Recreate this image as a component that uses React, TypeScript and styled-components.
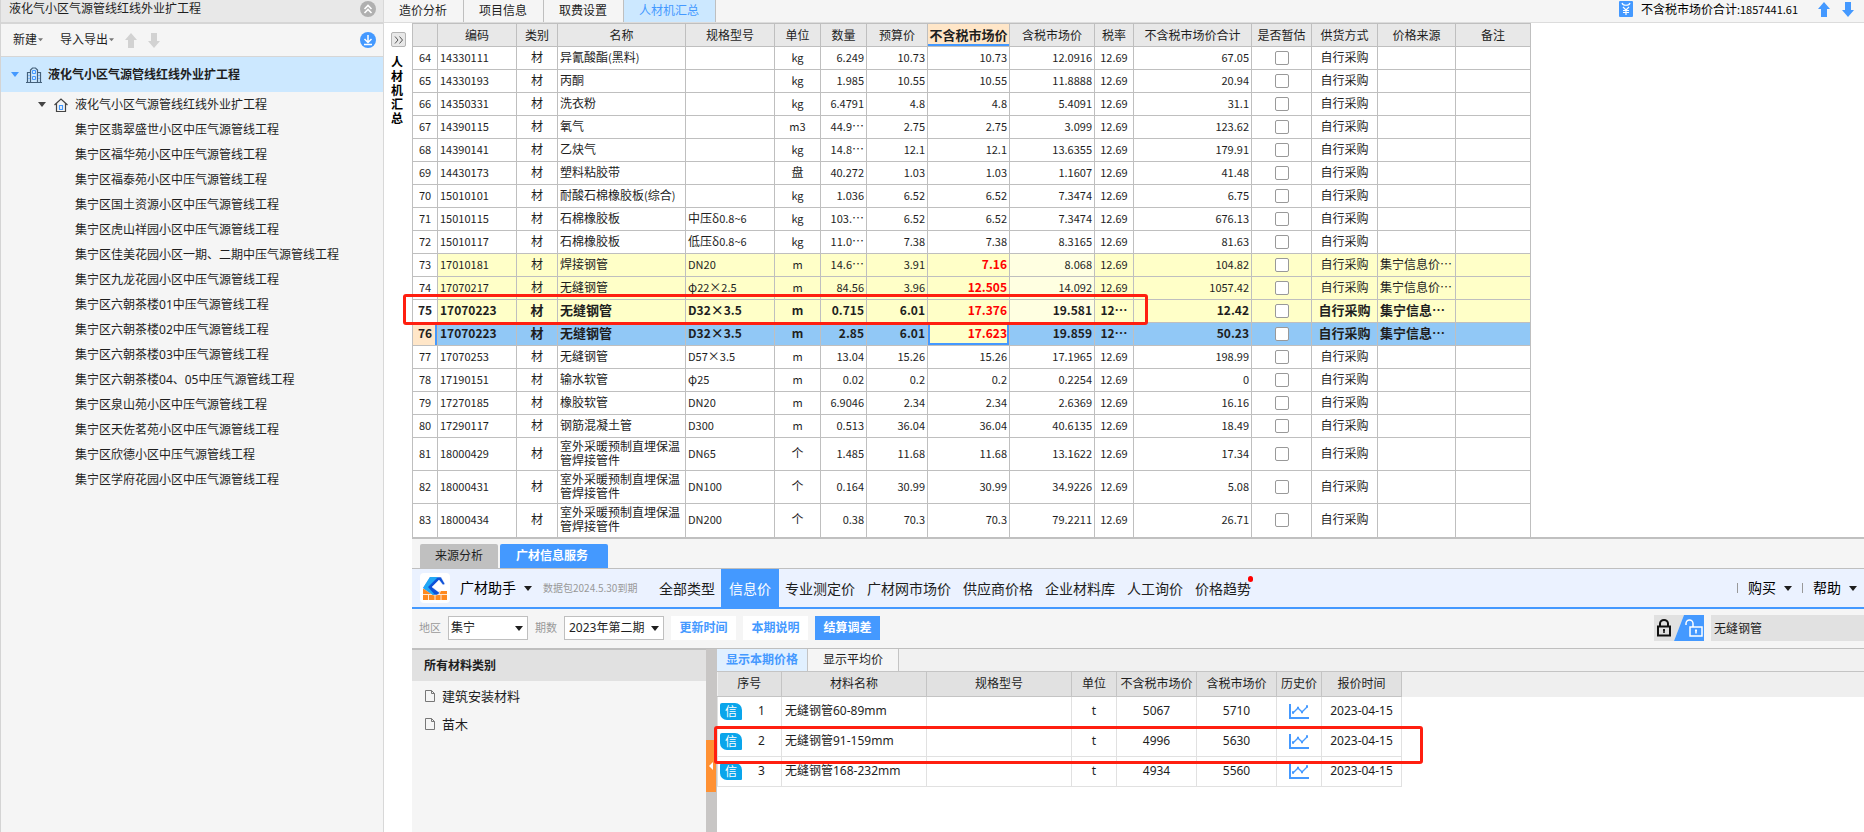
import React from 'react';
import styled, { createGlobalStyle, css } from 'styled-components';

const Global = createGlobalStyle`
  * { box-sizing: border-box; }
  html, body { margin: 0; height: 100%; background: #fff; }
  #root { height: 100%; }
  body, button, input, select, table {
    font-family: 'Noto Sans', 'Noto Sans CJK SC', sans-serif;
    font-size: 12px;
    line-height: 16px;
    color: #1e1e1e;
  }
  button { margin: 0; padding: 0; border: 0; background: none; white-space: nowrap; }
  h2, ul { margin: 0; padding: 0; }
  svg { display: block; flex: none; }
`;

const BLUE = '#4499ff';
const SONG = "'Noto Sans CJK SC', sans-serif";

/* ---------- page ---------- */
const Page = styled.div`
  display: flex;
  min-height: 100%;
  min-width: 1560px;
`;

/* ---------- project sidebar ---------- */
const Sidebar = styled.aside`
  flex: none;
  width: 384px;
  background: #f5f5f5;
  border-left: 1px solid #d4d4d4;
  border-right: 1px solid #d8d8d8;
`;
const SideTitle = styled.header`
  display: flex;
  align-items: center;
  justify-content: space-between;
  height: 24px;
  padding: 0 7px 4px 8px;
  background: #e8e8e8;
  border-bottom: 2px solid #d6d6d6;
`;
const SideTools = styled.div`
  display: flex;
  align-items: center;
  height: 33px;
  padding: 0 7px 0 12px;
  gap: 11px;
  border-bottom: 1px solid #d6d6d6;
  & > :last-child { margin-left: auto; }
`;
const MenuButton = styled.button`
  display: flex;
  align-items: center;
  gap: 1px;
  & + & { margin-left: 6px; }
`;
const Tree = styled.ul`
  list-style: none;
`;
const TreeRoot = styled.li`
  display: flex;
  align-items: center;
  height: 35px;
  padding-left: 10px;
  background: #cce8ff;
  font-weight: 700;
  svg + svg { margin: 0 6px 0 7px; }
`;
const TreeItem = styled.li<{ $branch?: boolean }>`
  display: flex;
  align-items: center;
  height: 25px;
  padding-left: ${(p) => (p.$branch ? 37 : 74)}px;
  svg + svg { margin: 0 7px 0 8px; }
`;

/* ---------- main column ---------- */
const Main = styled.main`
  flex: 1;
  min-width: 0;
  display: flex;
  flex-direction: column;
`;
const TopBar = styled.header`
  display: flex;
  height: 23px;
  background: #f5f5f5;
  border-bottom: 1px solid #dcdcdc;
`;
const TopTab = styled.button<{ $active?: boolean }>`
  padding: 0 16px 0 15px;
  height: 22px;
  border-right: 1px solid #bfbfbf;
  ${(p) => p.$active && css`background: #cce8ff; color: ${BLUE};`}
`;
const Total = styled.div`
  display: flex;
  align-items: center;
  margin-left: auto;
  padding: 0 10px 4px 0;
  font-family: ${SONG};
  color: #000;
  svg + svg { margin-left: 12px; }
`;
const TotalText = styled.span`
  margin: 0 20px 0 8px;
`;
const Body = styled.div`
  flex: 1;
  display: flex;
`;
const Strip = styled.div`
  flex: none;
  width: 28px;
  padding: 9px 0 0 7px;
`;
const ExpandButton = styled.button`
  display: grid;
  place-items: center;
  width: 15px;
  height: 15px;
  border: 1px solid #b4b4b4;
  border-radius: 2px;
  background: #e8e8e8;
`;
const StripLabel = styled.div`
  width: 12px;
  margin-top: 8px;
  font-family: ${SONG};
  font-weight: 700;
  line-height: 14px;
  color: #000;
`;
const Content = styled.div`
  flex: 1;
  min-width: 0;
  display: flex;
  flex-direction: column;
`;

/* ---------- material grid ---------- */
const GridArea = styled.section`
  position: relative;
  flex: none;
  height: 514px;
`;
const Grid = styled.table`
  table-layout: fixed;
  width: 1119px;
  border-collapse: collapse;
  font-family: ${SONG};
  th, td {
    border: 1px solid #bfbfbf;
    padding: 0 2px 2px;
    overflow: hidden;
    font-weight: inherit;
    line-height: 14px;
  }
  thead th { background: #e8e8e8; height: 23px; white-space: nowrap; padding: 0; }
  thead th.current {
    background: #ffe6c8;
    font-weight: 700;
    font-size: 13px;
    box-shadow: inset 0 -2px ${BLUE};
  }
  tbody tr:last-child > * { border-bottom: 0; }
`;
const Small = styled.span`
  font-size: 11px;
`;
const Row = styled.tr<{ $tone?: Tone; $bold?: boolean; $tall?: boolean }>`
  height: ${(p) => (p.$tall ? 33 : 23)}px;
  td { background: ${(p) => (p.$tone === 'selected' ? '#91c8f6' : p.$tone === 'changed' ? '#ffffc8' : '#fff')}; }
  ${(p) => p.$bold && css`
    font-weight: 700;
    font-size: 13px;
    ${Small} { font-size: 12px; }
  `}
`;
const RowNo = styled.th<{ $selected?: boolean }>`
  ${(p) => p.$selected && css`background: #ffe6c8; box-shadow: inset -2px 0 ${BLUE};`}
`;
const Cell = styled.td<{ $align?: 'left' | 'center' | 'right'; $wrap?: boolean }>`
  text-align: ${(p) => p.$align ?? 'left'};
  white-space: ${(p) => (p.$wrap ? 'normal' : 'nowrap')};
`;
const PriceCell = styled(Cell)<{ $changed?: boolean; $selected?: boolean }>`
  ${(p) => p.$changed && css`
    &&& { color: #f00; font-weight: 700; }
    ${Small} { font-size: 12px; }
  `}
  ${(p) => p.$selected && css`
    &&& {
      background: #ffffc8;
      box-shadow: inset 2px 0 ${BLUE}, inset -2px 0 ${BLUE}, inset 0 -2px ${BLUE};
    }
  `}
`;
const TaxedCell = styled(Cell)<{ $light?: boolean }>`
  ${(p) => p.$light && css`&&& { background: #ffffe1; }`}
`;
const Tick = styled.input`
  display: block;
  appearance: none;
  width: 14px;
  height: 14px;
  margin: 1px auto 0;
  border: 1px solid #999;
  border-radius: 2px;
  background: #fff;
`;
const Mark = styled.div`
  position: absolute;
  border: 3px solid #ff1f10;
  border-radius: 3px;
  pointer-events: none;
`;
const GridMark = styled(Mark)`
  left: -9px;
  top: 271px;
  width: 745px;
  height: 31px;
`;

/* ---------- price service panel ---------- */
const Panel = styled.section`
  flex: 1;
  display: flex;
  flex-direction: column;
  border-top: 2px solid #c0c0c0;
  background: #f5f5f5;
`;
const PanelTabs = styled.div`
  display: flex;
  align-items: flex-end;
  gap: 2px;
  height: 30px;
  padding-left: 8px;
  border-bottom: 1px solid #bfbfbf;
`;
const PanelTab = styled.button<{ $active?: boolean }>`
  height: 24px;
  padding: 0 15px;
  border-radius: 2px 2px 0 0;
  background: #c0c0c0;
  ${(p) => p.$active && css`padding: 0 20px 0 16px; background: ${BLUE}; color: #fff; font-weight: 700;`}
`;
const ServiceBar = styled.div`
  display: flex;
  align-items: center;
  height: 40px;
  padding: 0 7px 0 8px;
  background: #ebf2ff;
  border-bottom: 2px solid ${BLUE};
`;
const Logo = styled.span`
  display: grid;
  place-items: center;
  width: 30px;
  height: 30px;
  margin-right: 10px;
  border-radius: 4px;
  background: #fff;
`;
const DropButton = styled.button`
  display: flex;
  align-items: center;
  gap: 8px;
  font-size: 14px;
  color: #000;
`;
const Expiry = styled.span`
  margin: 0 8px 0 11px;
  width: 102px;
  font-family: ${SONG};
  font-size: 10px;
  color: #999;
  white-space: nowrap;
`;
const Nav = styled.nav`
  display: flex;
  height: 38px;
`;
const NavLink = styled.a<{ $active?: boolean }>`
  position: relative;
  padding: 2px ${(p) => (p.$active ? 8 : 6)}px 0;
  font-size: 14px;
  line-height: 36px;
  color: #1e1e1e;
  text-decoration: none;
  white-space: nowrap;
  ${(p) => p.$active && css`background: ${BLUE}; color: #fff;`}
`;
const Dot = styled.i`
  position: absolute;
  top: 7px;
  right: 4px;
  width: 5px;
  height: 6px;
  border-radius: 3px;
  background: #f00;
`;
const BarEnd = styled.div`
  display: flex;
  align-items: center;
  gap: 10px;
  margin-left: auto;
`;
const Divider = styled.i`
  width: 1px;
  height: 10px;
  background: #999;
`;
const FilterBar = styled.form`
  display: flex;
  align-items: center;
  height: 40px;
  padding: 0 0 1px 7px;
  gap: 7px;
  border-bottom: 1px solid #bfbfbf;
`;
const FilterLabel = styled.label`
  display: flex;
  align-items: center;
  gap: 7px;
  font-size: 11px;
  color: #999;
`;
const SelectBox = styled.span`
  position: relative;
  display: flex;
  align-items: center;
  svg { position: absolute; right: 5px; pointer-events: none; }
`;
const Select = styled.select<{ $wide?: boolean }>`
  appearance: none;
  width: ${(p) => (p.$wide ? 100 : 80)}px;
  height: 24px;
  padding: 0 ${(p) => (p.$wide ? 4 : 2)}px;
  border: 1px solid #bfbfbf;
  border-radius: 0;
  background: #fff;
`;
const FilterButton = styled.button<{ $primary?: boolean }>`
  width: 65px;
  height: 24px;
  font-weight: 700;
  color: ${(p) => (p.$primary ? '#fff' : BLUE)};
  background: ${(p) => (p.$primary ? BLUE : '#fff')};
`;
const SearchGroup = styled.div`
  display: flex;
  gap: 7px;
  margin-left: auto;
`;
const Search = styled.input`
  width: 153px;
  height: 26px;
  padding: 0 3px;
  border: 0;
  background: #e1e1e1;
`;
const Split = styled.div`
  flex: 1;
  display: flex;
`;
const Categories = styled.aside`
  flex: none;
  width: 294px;
  h2 {
    height: 32px;
    padding-left: 12px;
    background: #e1e1e1;
    border-top: 1px solid #bfbfbf;
    font-size: 12px;
    line-height: 32px;
  }
  ul { list-style: none; padding-top: 1px; }
`;
const Category = styled.li`
  display: flex;
  align-items: center;
  gap: 7px;
  height: 28px;
  padding-left: 13px;
  font-size: 13px;
`;
const Splitter = styled.div`
  flex: none;
  width: 11px;
  padding-top: 91px;
  background: #c8c6c5;
`;
const SplitHandle = styled.button`
  display: flex;
  align-items: center;
  justify-content: flex-end;
  width: 10px;
  height: 52px;
  padding-right: 3px;
  background: #ff9133;
`;
const Results = styled.div`
  position: relative;
  flex: 1;
  background: #fff;
`;
const ResultTabs = styled.div`
  display: flex;
  height: 23px;
  background: #f1f1f1;
  border-bottom: 1px solid #c4c4c4;
`;
const ResultTab = styled.button<{ $active?: boolean }>`
  padding: 0 ${(p) => (p.$active ? 9 : 15)}px;
  border-right: 1px solid #c4c4c4;
  background: #f5f5f5;
  ${(p) => p.$active && css`background: #e1f0ff; color: ${BLUE}; font-weight: 700;`}
`;
const ResultHead = styled.div`
  background: linear-gradient(#efefef 25px, #fff 25px);
`;
const PriceTable = styled.table`
  table-layout: fixed;
  width: 685px;
  border-collapse: collapse;
  text-align: center;
  th {
    height: 24px;
    padding: 0;
    background: #e1e1e1;
    border-right: 1px solid #c4c4c4;
    border-bottom: 1px solid #c4c4c4;
    font-weight: 400;
    white-space: nowrap;
  }
  td { height: 30px; padding: 0; border: 1px solid #e1e1e1; }
  td svg { margin: 0 auto; }
`;
const NameCell = styled.td`
  && { padding-left: 3px; }
  text-align: left;
  white-space: nowrap;
`;
const Index = styled.div`
  display: flex;
  align-items: center;
  gap: 16px;
  padding-left: 2px;
`;
const Badge = styled.span`
  width: 22px;
  height: 17px;
  border-radius: 2px 7px 1px 7px;
  background: #0aa5eb;
  color: #fff;
  line-height: 17px;
`;
const ResultMark = styled(Mark)`
  left: -3px;
  top: 77px;
  width: 709px;
  height: 38px;
`;

/* ---------- icons ---------- */
const Caret = ({ w = 8, color = '#1e1e1e' }: { w?: number; color?: string }) => (
  <svg width={w} height={w / 2 + 1} viewBox="0 0 8 5"><path d="M0 0h8L4 5z" fill={color} /></svg>
);
const Arrow = ({ down, w = 12, color = BLUE }: { down?: boolean; w?: number; color?: string }) => (
  <svg width={w} height="15" viewBox="0 0 12 15">
    <path d={down ? 'M3 0h6v8h3L6 15 0 8h3z' : 'M3 15h6V7h3L6 0 0 7h3z'} fill={color} />
  </svg>
);
const CollapseIcon = () => (
  <svg width="16" height="16" viewBox="0 0 16 16">
    <circle cx="8" cy="8" r="8" fill="#b0b0b0" />
    <path d="M4.500 8L8 4.500 11.500 8M4.500 12L8 8.500 11.500 12" fill="none" stroke="#fff" strokeWidth="1.600" />
  </svg>
);
const DownloadIcon = () => (
  <svg width="16" height="16" viewBox="0 0 16 16">
    <circle cx="8" cy="8" r="8" fill={BLUE} />
    <path d="M8 3v7M4.500 7L8 10.500 11.500 7M4 12.500h8" fill="none" stroke="#fff" strokeWidth="1.500" />
  </svg>
);
const BuildingIcon = () => (
  <svg width="16" height="16" viewBox="0 0 16 16" fill="none">
    <path d="M0 15.500h16M4.500 15V3l2-2h3l2 2v12M4.500 5.500h-3V15M11.500 5.500h3V15" stroke="#44607a" strokeWidth="1.200" />
    <path d="M6.500 3.500h3v3h-3zM6.500 9.500h3v3h-3zM2.500 8.500h1M2.500 11.500h1M12.500 8.500h1M12.500 11.500h1" stroke={BLUE} />
  </svg>
);
const HouseIcon = () => (
  <svg width="14" height="14" viewBox="0 0 14 14" fill="none">
    <path d="M.5 7L7 1l6.500 6M2.500 5.500v8h9v-8" stroke="#444" strokeWidth="1.200" />
    <path d="M5.500 7.500h3v4h-3z" stroke={BLUE} strokeWidth="1.200" />
  </svg>
);
const YuanIcon = () => (
  <svg width="14" height="16" viewBox="0 0 14 16" fill="none">
    <rect width="14" height="16" rx="1" fill={BLUE} />
    <path d="M3 2c1 3 7 3 8 0M4 6l3 3 3-3M4 9.500h6M4 11.500h6M7 9v5" stroke="#fff" strokeWidth="1.200" />
  </svg>
);
const LogoIcon = () => (
  <svg width="24" height="23" viewBox="0 0 24 23">
    <path d="M0 12h8l5 4 5-2h6v9H0z" fill="#ff8a1e" />
    <path d="M0 17.500h24M5.500 18v5M12 17.500V23M18 18v5M18 12.500l-2 5" stroke="#fff" strokeWidth=".8" />
    <path d="M7 0h11l4 7-2 1-4-5-7 7 8 6-3 2h-4L0 11z" fill="#0f52d8" stroke="#fff" strokeWidth=".5" />
    <path d="M7 0h8L5 10l7 8h-2L0 11z" fill="#22a8f5" />
  </svg>
);
const FileIcon = () => (
  <svg width="10" height="12" viewBox="0 0 10 12" fill="none">
    <path d="M.5.5h6l3 3v8h-9zM6.500.5v3h3" stroke="#777" />
  </svg>
);
const ChevronsIcon = () => (
  <svg width="10" height="8" viewBox="0 0 10 8" fill="none">
    <path d="M1 .5L4 4 1 7.500M5.500.5l3 3.500-3 3.500" stroke="#555" />
  </svg>
);
const ChartIcon = () => (
  <svg width="20" height="15" viewBox="0 0 20 15" fill="none" stroke={BLUE}>
    <path d="M1 0v14h19" strokeWidth="2" />
    <path d="M4 9l5-5 4 4 5-5" strokeWidth="1.300" />
    <path d="M3 8.500h2M8 4h2M12 8h2M17 2.500h2" strokeWidth="2.500" />
  </svg>
);
const LockToggle = () => (
  <svg width="50" height="26" viewBox="0 0 50 26" fill="none">
    <path d="M0 0h30L20 26H0z" fill="#e1e1e1" />
    <path d="M30 0h20v26H20z" fill={BLUE} />
    <path d="M4 11.500h12v9H4zM6 11V8.500a4 3.500 0 0 1 8 0V11" stroke="#111" strokeWidth="2" />
    <path d="M10 14v4M9 15h2" stroke="#111" strokeWidth="1.500" />
    <path d="M36 12h12v9H36zM39 12V8.500a3.500 3.500 0 0 0-7 0V10" stroke="#fff" strokeWidth="1.500" />
    <path d="M42 14.500v4M41 15.500h2" stroke="#fff" strokeWidth="1.500" />
  </svg>
);

/* ---------- data ---------- */
type Tone = 'changed' | 'selected';
type Material = {
  no: number; code: string; name: string; spec?: string; unit: string; qty: string; budget: string;
  price: string; taxed: string; rate?: string; sum: string; source?: string;
  tone?: Tone; bold?: boolean;
};
const PIPE = '室外采暖预制直埋保温管焊接管件';
const materials: Material[] = [
  { no: 64, code: '14330111', name: '异氰酸酯(黑料)', unit: 'kg', qty: '6.249', budget: '10.73', price: '10.73', taxed: '12.0916', sum: '67.05' },
  { no: 65, code: '14330193', name: '丙酮', unit: 'kg', qty: '1.985', budget: '10.55', price: '10.55', taxed: '11.8888', sum: '20.94' },
  { no: 66, code: '14350331', name: '洗衣粉', unit: 'kg', qty: '6.4791', budget: '4.8', price: '4.8', taxed: '5.4091', sum: '31.1' },
  { no: 67, code: '14390115', name: '氧气', unit: 'm3', qty: '44.9…', budget: '2.75', price: '2.75', taxed: '3.099', sum: '123.62' },
  { no: 68, code: '14390141', name: '乙炔气', unit: 'kg', qty: '14.8…', budget: '12.1', price: '12.1', taxed: '13.6355', sum: '179.91' },
  { no: 69, code: '14430173', name: '塑料粘胶带', unit: '盘', qty: '40.272', budget: '1.03', price: '1.03', taxed: '1.1607', sum: '41.48' },
  { no: 70, code: '15010101', name: '耐酸石棉橡胶板(综合)', unit: 'kg', qty: '1.036', budget: '6.52', price: '6.52', taxed: '7.3474', sum: '6.75' },
  { no: 71, code: '15010115', name: '石棉橡胶板', spec: '中压δ0.8~6', unit: 'kg', qty: '103.…', budget: '6.52', price: '6.52', taxed: '7.3474', sum: '676.13' },
  { no: 72, code: '15010117', name: '石棉橡胶板', spec: '低压δ0.8~6', unit: 'kg', qty: '11.0…', budget: '7.38', price: '7.38', taxed: '8.3165', sum: '81.63' },
  { no: 73, code: '17010181', name: '焊接钢管', spec: 'DN20', unit: 'm', qty: '14.6…', budget: '3.91', price: '7.16', taxed: '8.068', sum: '104.82', source: '集宁信息价…', tone: 'changed' },
  { no: 74, code: '17070217', name: '无缝钢管', spec: 'φ22×2.5', unit: 'm', qty: '84.56', budget: '3.96', price: '12.505', taxed: '14.092', sum: '1057.42', source: '集宁信息价…', tone: 'changed' },
  { no: 75, code: '17070223', name: '无缝钢管', spec: 'D32×3.5', unit: 'm', qty: '0.715', budget: '6.01', price: '17.376', taxed: '19.581', rate: '12…', sum: '12.42', source: '集宁信息…', tone: 'changed', bold: true },
  { no: 76, code: '17070223', name: '无缝钢管', spec: 'D32×3.5', unit: 'm', qty: '2.85', budget: '6.01', price: '17.623', taxed: '19.859', rate: '12…', sum: '50.23', source: '集宁信息…', tone: 'selected', bold: true },
  { no: 77, code: '17070253', name: '无缝钢管', spec: 'D57×3.5', unit: 'm', qty: '13.04', budget: '15.26', price: '15.26', taxed: '17.1965', sum: '198.99' },
  { no: 78, code: '17190151', name: '输水软管', spec: 'φ25', unit: 'm', qty: '0.02', budget: '0.2', price: '0.2', taxed: '0.2254', sum: '0' },
  { no: 79, code: '17270185', name: '橡胶软管', spec: 'DN20', unit: 'm', qty: '6.9046', budget: '2.34', price: '2.34', taxed: '2.6369', sum: '16.16' },
  { no: 80, code: '17290117', name: '钢筋混凝土管', spec: 'D300', unit: 'm', qty: '0.513', budget: '36.04', price: '36.04', taxed: '40.6135', sum: '18.49' },
  { no: 81, code: '18000429', name: PIPE, spec: 'DN65', unit: '个', qty: '1.485', budget: '11.68', price: '11.68', taxed: '13.1622', sum: '17.34' },
  { no: 82, code: '18000431', name: PIPE, spec: 'DN100', unit: '个', qty: '0.164', budget: '30.99', price: '30.99', taxed: '34.9226', sum: '5.08' },
  { no: 83, code: '18000434', name: PIPE, spec: 'DN200', unit: '个', qty: '0.38', budget: '70.3', price: '70.3', taxed: '79.2211', sum: '26.71' },
];
const columns: [string, number][] = [
  ['', 25], ['编码', 79], ['类别', 41], ['名称', 128], ['规格型号', 89], ['单位', 46], ['数量', 46], ['预算价', 61],
  ['不含税市场价', 82], ['含税市场价', 85], ['税率', 39], ['不含税市场价合计', 118], ['是否暂估', 60], ['供货方式', 66],
  ['价格来源', 78], ['备注', 75],
];
const projects = ['翡翠盛世小区', '福华苑小区', '福泰苑小区', '国土资源小区', '虎山祥园小区', '佳美花园小区一期、二期', '九龙花园小区',
  '六朝茶楼01', '六朝茶楼02', '六朝茶楼03', '六朝茶楼04、05', '泉山苑小区', '天佐茗苑小区', '欣德小区', '学府花园小区'];
const navItems = ['全部类型', '信息价', '专业测定价', '广材网市场价', '供应商价格', '企业材料库', '人工询价', '价格趋势'];
const priceColumns: [string, number][] = [['序号', 64], ['材料名称', 145], ['规格型号', 145], ['单位', 45], ['不含税市场价', 80],
  ['含税市场价', 80], ['历史价', 45], ['报价时间', 80]];
const prices = [
  ['无缝钢管60-89mm', '5067', '5710'],
  ['无缝钢管91-159mm', '4996', '5630'],
  ['无缝钢管168-232mm', '4934', '5560'],
];

/** Sets the half-width runs of a string one step smaller than its Chinese text. */
const mixed = (text = '') =>
  text.split(/([\x20-\x7e]+)/).filter(Boolean).map((run, i) =>
    /^[\x20-\x7e]/.test(run) ? <Small key={i}>{run}</Small> : <React.Fragment key={i}>{run}</React.Fragment>);

const MaterialRow = ({ m }: { m: Material }) => {
  const selected = m.tone === 'selected';
  return (
    <Row $tone={m.tone} $bold={m.bold} $tall={m.name === PIPE}>
      <RowNo scope="row" $selected={selected}>{mixed(String(m.no))}</RowNo>
      <Cell>{mixed(m.code)}</Cell>
      <Cell $align="center">材</Cell>
      <Cell $wrap>{mixed(m.name)}</Cell>
      <Cell>{mixed(m.spec)}</Cell>
      <Cell $align="center">{mixed(m.unit)}</Cell>
      <Cell $align="right">{mixed(m.qty)}</Cell>
      <Cell $align="right">{mixed(m.budget)}</Cell>
      <PriceCell $align="right" $changed={!!m.tone} $selected={selected}>{mixed(m.price)}</PriceCell>
      <TaxedCell $align="right" $light={m.tone === 'changed'}>{mixed(m.taxed)}</TaxedCell>
      <Cell $align="center">{mixed(m.rate ?? '12.69')}</Cell>
      <Cell $align="right">{mixed(m.sum)}</Cell>
      <Cell><Tick type="checkbox" aria-label={`${m.no} 是否暂估`} /></Cell>
      <Cell $align="center">自行采购</Cell>
      <Cell>{m.source}</Cell>
      <Cell />
    </Row>
  );
};

export default function App() {
  return (
    <Page>
      <Global />
      <Sidebar>
        <SideTitle>液化气小区气源管线红线外业扩工程<button aria-label="收起"><CollapseIcon /></button></SideTitle>
        <SideTools>
          <MenuButton>新建<Caret w={5} color="#777" /></MenuButton>
          <MenuButton>导入导出<Caret w={5} color="#777" /></MenuButton>
          <button aria-label="上移"><Arrow color="#d2d2d2" /></button>
          <button aria-label="下移"><Arrow down color="#d2d2d2" /></button>
          <button aria-label="下载"><DownloadIcon /></button>
        </SideTools>
        <Tree>
          <TreeRoot><Caret color={BLUE} /><BuildingIcon />液化气小区气源管线红线外业扩工程</TreeRoot>
          <TreeItem $branch><Caret color="#444" /><HouseIcon />液化气小区气源管线红线外业扩工程</TreeItem>
          {projects.map((p) => <TreeItem key={p}>集宁区{p}中压气源管线工程</TreeItem>)}
        </Tree>
      </Sidebar>
      <Main>
        <TopBar>
          <TopTab>造价分析</TopTab>
          <TopTab>项目信息</TopTab>
          <TopTab>取费设置</TopTab>
          <TopTab $active>人材机汇总</TopTab>
          <Total>
            <YuanIcon />
            <TotalText>{mixed('不含税市场价合计:1857441.61')}</TotalText>
            <Arrow /><Arrow down />
          </Total>
        </TopBar>
        <Body>
          <Strip>
            <ExpandButton aria-label="展开"><ChevronsIcon /></ExpandButton>
            <StripLabel>人材机汇总</StripLabel>
          </Strip>
          <Content>
            <GridArea>
              <Grid>
                <colgroup>{columns.map(([t, w]) => <col key={t} width={w} />)}</colgroup>
                <thead>
                  <tr>{columns.map(([t]) => <th key={t} scope="col" className={t === '不含税市场价' ? 'current' : undefined}>{t}</th>)}</tr>
                </thead>
                <tbody>{materials.map((m) => <MaterialRow key={m.no} m={m} />)}</tbody>
              </Grid>
              <GridMark />
            </GridArea>
            <Panel>
              <PanelTabs>
                <PanelTab>来源分析</PanelTab>
                <PanelTab $active>广材信息服务</PanelTab>
              </PanelTabs>
              <ServiceBar>
                <Logo><LogoIcon /></Logo>
                <DropButton>广材助手<Caret /></DropButton>
                <Expiry>数据包2024.5.30到期</Expiry>
                <Nav>
                  {navItems.map((t) => (
                    <NavLink key={t} href="#" $active={t === '信息价'}>{t}{t === '价格趋势' && <Dot />}</NavLink>
                  ))}
                </Nav>
                <BarEnd>
                  <Divider /><DropButton>购买<Caret /></DropButton>
                  <Divider /><DropButton>帮助<Caret /></DropButton>
                </BarEnd>
              </ServiceBar>
              <FilterBar>
                <FilterLabel>地区
                  <SelectBox><Select defaultValue="集宁"><option>集宁</option></Select><Caret /></SelectBox>
                </FilterLabel>
                <FilterLabel>期数
                  <SelectBox><Select $wide defaultValue="2023年第二期"><option>2023年第二期</option></Select><Caret /></SelectBox>
                </FilterLabel>
                <FilterButton type="button">更新时间</FilterButton>
                <FilterButton type="button">本期说明</FilterButton>
                <FilterButton type="button" $primary>结算调差</FilterButton>
                <SearchGroup>
                  <button type="button" aria-label="锁定"><LockToggle /></button>
                  <Search aria-label="搜索材料" defaultValue="无缝钢管" />
                </SearchGroup>
              </FilterBar>
              <Split>
                <Categories>
                  <h2>所有材料类别</h2>
                  <ul>
                    <Category><FileIcon />建筑安装材料</Category>
                    <Category><FileIcon />苗木</Category>
                  </ul>
                </Categories>
                <Splitter>
                  <SplitHandle aria-label="收起分类">
                    <svg width="4" height="8" viewBox="0 0 4 8"><path d="M4 0v8L0 4z" fill="#fff" /></svg>
                  </SplitHandle>
                </Splitter>
                <Results>
                  <ResultTabs>
                    <ResultTab $active>显示本期价格</ResultTab>
                    <ResultTab>显示平均价</ResultTab>
                  </ResultTabs>
                  <ResultHead>
                    <PriceTable>
                      <colgroup>{priceColumns.map(([t, w]) => <col key={t} width={w} />)}</colgroup>
                      <thead><tr>{priceColumns.map(([t]) => <th key={t} scope="col">{t}</th>)}</tr></thead>
                      <tbody>
                        {prices.map(([name, net, gross], i) => (
                          <tr key={name}>
                            <td><Index><Badge>信</Badge>{i + 1}</Index></td>
                            <NameCell>{name}</NameCell>
                            <td />
                            <td>t</td>
                            <td>{net}</td>
                            <td>{gross}</td>
                            <td><ChartIcon /></td>
                            <td>2023-04-15</td>
                          </tr>
                        ))}
                      </tbody>
                    </PriceTable>
                  </ResultHead>
                  <ResultMark />
                </Results>
              </Split>
            </Panel>
          </Content>
        </Body>
      </Main>
    </Page>
  );
}
